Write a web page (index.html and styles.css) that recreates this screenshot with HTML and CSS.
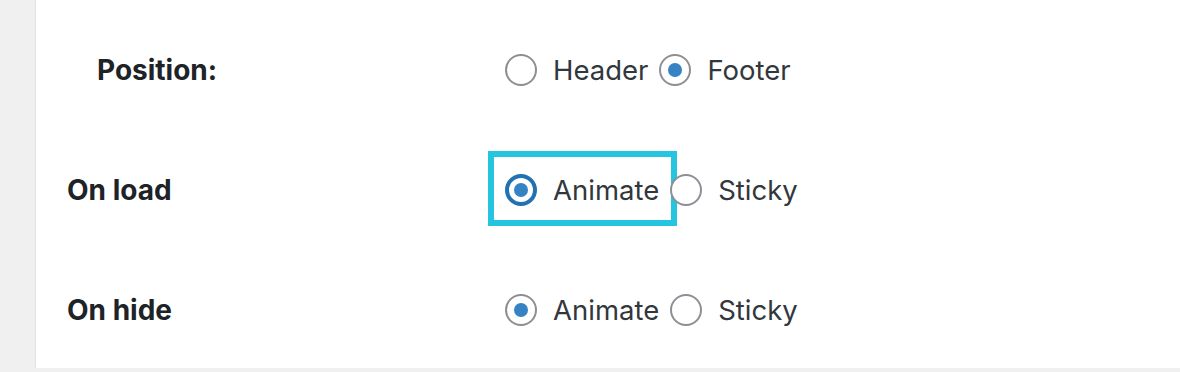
FILE: index.html
```html
<!DOCTYPE html>
<html lang="en">
<head>
    <meta charset="UTF-8">
    <meta name="viewport" content="width=device-width, initial-scale=1.0">
    <title>Display Settings</title>
    <link rel="stylesheet" href="styles.css">
</head>
<body>

    <div class="settings-panel">
        <div class="setting-row">
            <div class="setting-label indent">Position:</div>
            <div class="setting-options">
                <label class="option"><input type="radio" name="position"> Header</label>
                <label class="option"><input type="radio" name="position" checked> Footer</label>
            </div>
        </div>

        <div class="setting-row">
            <div class="setting-label">On load</div>
            <div class="setting-options">
                <label class="option highlight"><input type="radio" name="onload" class="focused" checked> Animate</label>
                <label class="option"><input type="radio" name="onload"> Sticky</label>
            </div>
        </div>

        <div class="setting-row">
            <div class="setting-label">On hide</div>
            <div class="setting-options">
                <label class="option"><input type="radio" name="onhide" checked> Animate</label>
                <label class="option"><input type="radio" name="onhide"> Sticky</label>
            </div>
        </div>
    </div>

</body>
</html>
```

FILE: styles.css
```css
* {
    box-sizing: border-box;
    margin: 0;
    padding: 0;
}

body {
    font-family: Inter, "Noto Sans", Arial, sans-serif;
    background-color: #f0f0f1;
    margin: 0;
    padding: 0 0 4px 35px;
}

.settings-panel {
    background-color: #fff;
    border-left: 1px solid #e2e2e4;
    height: 368px;
    padding-top: 10px;
}

.setting-row {
    display: flex;
    align-items: center;
    height: 120px;
}

.setting-label {
    width: 469px;
    padding-left: 31px;
    font-size: 28px;
    font-weight: 700;
    color: #1d2327;
}

.setting-label.indent {
    padding-left: 61px;
}

.setting-options {
    display: flex;
    align-items: center;
    gap: 11px;
}

.option {
    position: relative;
    display: inline-flex;
    align-items: center;
    gap: 16px;
    font-size: 27.5px;
    color: #32373c;
    height: 32px;
}

.option input[type="radio"] {
    appearance: none;
    -webkit-appearance: none;
    width: 32px;
    height: 32px;
    border: 2px solid #8c8f94;
    border-radius: 50%;
    background: #fff;
    display: flex;
    align-items: center;
    justify-content: center;
    flex-shrink: 0;
}

.option input[type="radio"]:checked::before {
    content: "";
    width: 14px;
    height: 14px;
    border-radius: 50%;
    background-color: #3582c4;
}

.option input.focused {
    border: 4px solid #2271b1;
}

/* annotation box around the first option */
.option.highlight::after {
    content: "";
    position: absolute;
    top: -23px;
    bottom: -20px;
    left: -17px;
    right: -18px;
    border: 6px solid #25c4df;
    pointer-events: none;
}
```
